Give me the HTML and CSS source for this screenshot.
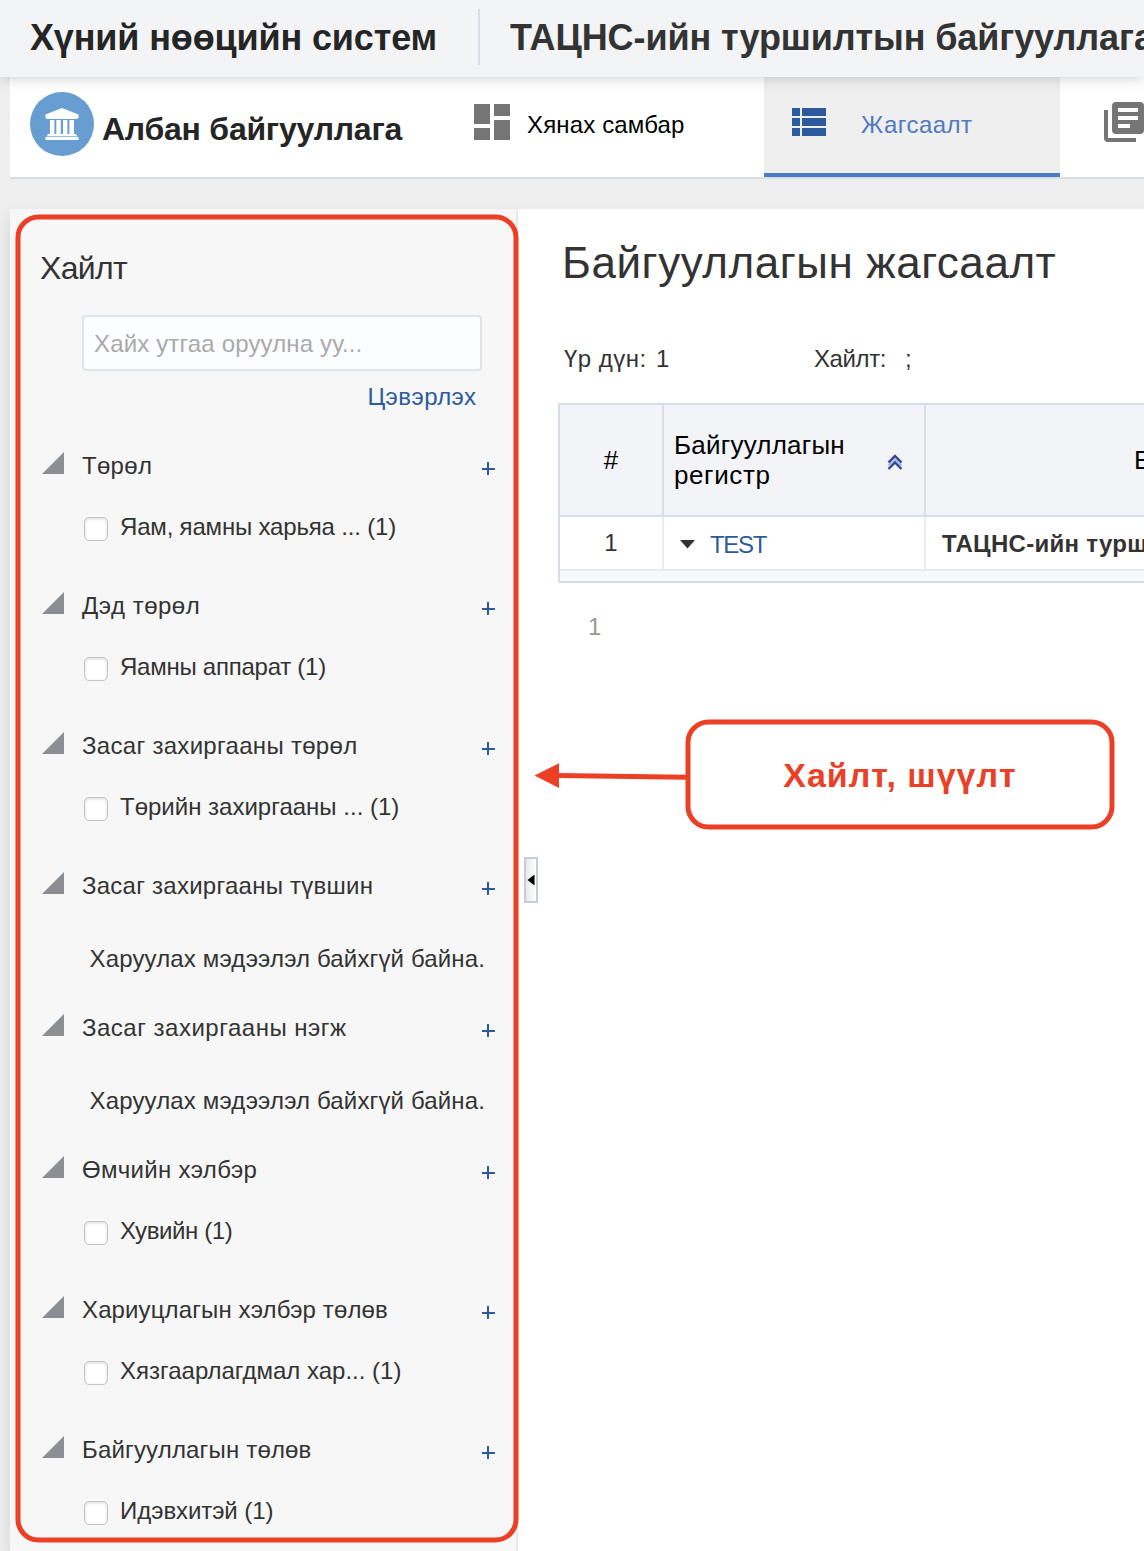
FILE: index.html
```html
<!DOCTYPE html>
<html lang="mn">
<head>
<meta charset="utf-8">
<title>Хүний нөөцийн систем</title>
<link rel="stylesheet" href="styles.css">
</head>
<body>
<div class="page">
  <header class="topbar">
    <div class="topbar-title">Хүний нөөцийн систем</div>
    <div class="topbar-org">ТАЦНС-ийн туршилтын байгууллага</div>
  </header>

  <nav class="module-nav">
    <div class="module">
      <svg class="module-icon" viewBox="0 0 64 64" width="64" height="64">
        <circle cx="32" cy="32" r="32" fill="#689dd2"/>
        <g fill="#fff">
          <path d="M32 16 48.500 22.500V25.500L47 27H17L15.500 25.500V22.500Z"/>
          <path d="M20 28h4.400v14h-4.400zM26.300 28h4.500v14h-4.500zM33 28h4.400v14h-4.400zM39.400 28h4.600v14h-4.600z"/>
          <path d="M18 42h28l1 2.300H17zM15.500 45h33v3h-33z"/>
        </g>
        <path d="M16.500 44.700h31" stroke="#a4c4e4" stroke-width=".8"/>
      </svg>
      <span class="module-name">Албан байгууллага</span>
    </div>
    <a class="tab tab-dashboard">
      <svg viewBox="0 0 36 36" width="36" height="36" fill="#757575" shape-rendering="crispEdges"><path d="M0 0h16v20H0zM20 0h16v12H20zM0 24h16v12H0zM20 16h16v20H20z"/></svg>
      <span>Хянах самбар</span>
    </a>
    <a class="tab tab-list">
      <svg viewBox="0 0 34 28" width="34" height="28" fill="#2c5b9b" shape-rendering="crispEdges"><path d="M0 0h8v8H0zM10 0h24v8H10zM0 10h8v8H0zM10 10h24v8H10zM0 20h8v8H0zM10 20h24v8H10z"/></svg>
      <span>Жагсаалт</span>
    </a>
    <a class="tab tab-library">
      <svg viewBox="0 0 40 40" width="40" height="40" fill="#757575"><path fill-rule="evenodd" d="M12 0H36a4 4 0 0 1 4 4V28a4 4 0 0 1-4 4H12a4 4 0 0 1-4-4V4a4 4 0 0 1 4-4ZM14 6v4h20V6ZM14 14v4h20v-4ZM14 22v4h12v-4Z"/><path d="M0 8h4v28h28v4H4a4 4 0 0 1-4-4Z"/></svg>
    </a>
  </nav>

  <div class="workspace">
    <aside class="sidebar">
      <h2 class="sidebar-title">Хайлт</h2>
      <div class="search-box">Хайх утгаа оруулна уу...</div>
      <a class="clear">Цэвэрлэх</a>

      <section class="facet facet-type">
        <div class="facet-head"><svg class="fold" viewBox="0 0 24 24"><path d="M23 1V23H1Z"/></svg><h3>Төрөл</h3><a class="plus"></a></div>
        <label class="option"><i class="check"></i><span>Яам, яамны харьяа ... (1)</span></label>
      </section>
      <section class="facet facet-subtype">
        <div class="facet-head"><svg class="fold" viewBox="0 0 24 24"><path d="M23 1V23H1Z"/></svg><h3>Дэд төрөл</h3><a class="plus"></a></div>
        <label class="option"><i class="check"></i><span>Яамны аппарат (1)</span></label>
      </section>
      <section class="facet facet-admin-type">
        <div class="facet-head"><svg class="fold" viewBox="0 0 24 24"><path d="M23 1V23H1Z"/></svg><h3>Засаг захиргааны төрөл</h3><a class="plus"></a></div>
        <label class="option"><i class="check"></i><span>Төрийн захиргааны ... (1)</span></label>
      </section>
      <section class="facet facet-empty facet-level">
        <div class="facet-head"><svg class="fold" viewBox="0 0 24 24"><path d="M23 1V23H1Z"/></svg><h3>Засаг захиргааны түвшин</h3><a class="plus"></a></div>
        <p class="empty">Харуулах мэдээлэл байхгүй байна.</p>
      </section>
      <section class="facet facet-empty facet-unit">
        <div class="facet-head"><svg class="fold" viewBox="0 0 24 24"><path d="M23 1V23H1Z"/></svg><h3>Засаг захиргааны нэгж</h3><a class="plus"></a></div>
        <p class="empty">Харуулах мэдээлэл байхгүй байна.</p>
      </section>
      <section class="facet facet-ownership">
        <div class="facet-head"><svg class="fold" viewBox="0 0 24 24"><path d="M23 1V23H1Z"/></svg><h3>Өмчийн хэлбэр</h3><a class="plus"></a></div>
        <label class="option"><i class="check"></i><span>Хувийн (1)</span></label>
      </section>
      <section class="facet facet-liability">
        <div class="facet-head"><svg class="fold" viewBox="0 0 24 24"><path d="M23 1V23H1Z"/></svg><h3>Хариуцлагын хэлбэр төлөв</h3><a class="plus"></a></div>
        <label class="option"><i class="check"></i><span>Хязгаарлагдмал хар... (1)</span></label>
      </section>
      <section class="facet facet-status">
        <div class="facet-head"><svg class="fold" viewBox="0 0 24 24"><path d="M23 1V23H1Z"/></svg><h3>Байгууллагын төлөв</h3><a class="plus"></a></div>
        <label class="option"><i class="check"></i><span>Идэвхитэй (1)</span></label>
      </section>
    </aside>

    <main class="content">
      <h1>Байгууллагын жагсаалт</h1>
      <div class="summary">
        <span class="sum-label">Үр дүн:</span><span class="sum-count">1</span>
        <span class="sum-query">Хайлт:</span><span class="sum-semi">;</span>
      </div>
      <div class="grid">
        <div class="grid-row grid-head">
          <div class="cell cell-num">#</div>
          <div class="cell cell-reg">
            <div class="col-title"><div class="col-line1">Байгууллагын</div><div class="col-line2">регистр</div></div>
            <svg class="sort" viewBox="0 0 16 16" width="16" height="16" fill="none" stroke-width="2.400"><path d="M1.500 11.500 8 5.500 14.500 11.500" stroke="#a9bdf0"/><path d="M1.500 8.500 8 2 14.500 8.500M1.500 15 8 8.500 14.500 15" stroke="#35468c"/></svg>
          </div>
          <div class="cell cell-name">Байгууллагын нэр</div>
        </div>
        <div class="grid-row grid-data">
          <div class="cell cell-num">1</div>
          <div class="cell cell-reg"><svg class="caret" viewBox="0 0 15 9" width="15" height="9"><path d="M0 0H15L7.500 8.500Z" fill="#333"/></svg><a>TEST</a></div>
          <div class="cell cell-name">ТАЦНС-ийн туршилтын байгууллага</div>
        </div>
        <div class="grid-foot"></div>
      </div>
      <div class="pager">1</div>
    </main>
  </div>

  <div class="collapse"><svg viewBox="0 0 8 12" width="8" height="12"><path d="M7.500 .5V11.500L.5 6Z" fill="#000"/></svg></div>
  <div class="highlight"></div>
  <svg class="arrow" viewBox="0 0 154 26" width="154" height="26"><path d="M24 12.500 153 14.300" stroke="#eb4025" stroke-width="5"/><path d="M.5 12.500 25 .3V25Z" fill="#eb4025"/></svg>
  <div class="callout">Хайлт, шүүлт</div>
</div>
</body>
</html>
```
FILE: styles.css
```css
* { box-sizing: border-box; }

body {
  margin: 0;
  background: #efefef;
  color: #333;
  font: 24px/40px "Liberation Sans", Arial, sans-serif;
}

h1, h2, h3, p { margin: 0; font-weight: normal; }
svg { display: block; flex: none; }

.page {
  position: relative;
  width: 1144px;
  height: 1551px;
  overflow: hidden;
}

/* Top bar */
.topbar {
  position: relative;
  z-index: 2;
  display: flex;
  height: 77px;
  padding: 9px 0 0 30px;
  background: #f3f4f6;
  box-shadow: 0 0 14px rgba(0, 0, 0, .22);
  font-size: 36px;
  font-weight: bold;
  line-height: 57px;
  white-space: nowrap;
}
.topbar-title {
  flex: none;
  width: 450px;
  height: 56px;
  border-right: 2px solid #d6dfe6;
  color: #252525;
  letter-spacing: -.14px;
}
.topbar-org { padding-left: 30px; letter-spacing: -.1px; }

/* Module navigation */
.module-nav {
  display: flex;
  height: 102px;
  margin-left: 10px;
  background: #fff;
  border-bottom: 2px solid #d8dfe4;
}
.module {
  display: flex;
  width: 436px;
  padding: 15px 0 0 20px;
}
.module-name {
  padding: 17px 0 0 8px;
  color: #252525;
  font-size: 32px;
  font-weight: bold;
  letter-spacing: -.24px;
  white-space: nowrap;
}
.tab { display: flex; height: 100px; color: #000; }
.tab span { margin-top: 28px; letter-spacing: .15px; }
.tab-dashboard { width: 318px; padding: 0 0 0 28px; gap: 17px; }
.tab-dashboard svg { margin-top: 27px; }
.tab-list {
  width: 296px;
  padding-left: 28px;
  gap: 35px;
  background: #efefef;
  border-bottom: 4px solid #5079bf;
  color: #5079bf;
}
.tab-list svg { margin-top: 31px; }
.tab-list span { letter-spacing: .47px; }
.tab-library { padding-left: 44px; }
.tab-library svg { margin-top: 25px; }

/* Workspace */
.workspace {
  display: flex;
  height: 1342px;
  margin: 30px 0 0 10px;
  box-shadow: 0 8px 16px rgba(0, 0, 0, .12);
}
.sidebar {
  display: flex;
  flex: none;
  flex-direction: column;
  width: 508px;
  padding-top: 39px;
  background: #f7f7f7;
  border-right: 2px solid #e9e9e9;
}
.sidebar-title {
  padding-left: 30px;
  font-size: 32px;
  line-height: 40px;
  letter-spacing: -.7px;
}
.search-box {
  width: 400px;
  height: 56px;
  margin: 27px 0 0 72px;
  padding-left: 10px;
  background: #fcfdff;
  border: 2px solid #dfe4e7;
  border-radius: 4px;
  color: #aaa;
  line-height: 54px;
  letter-spacing: .15px;
}
.clear {
  align-self: flex-end;
  margin: 6px 39.500px 29px 0;
  color: #2c5b9b;
  letter-spacing: .45px;
}

/* Facets */
.facet { flex: none; height: 140px; }
.facet-empty { height: 142px; }
.facet-head {
  display: flex;
  height: 40px;
  padding-left: 31px;
}
.fold { width: 24px; height: 24px; margin-top: 5px; fill: #8b8e93; }
.facet h3 {
  flex: 1;
  padding-left: 17px;
  font-size: 24px;
  white-space: nowrap;
  letter-spacing: .3px;
}
.plus {
  width: 13px;
  height: 13px;
  margin: 16px 21.500px 0 0;
  background:
    linear-gradient(#2c5b9b, #2c5b9b) center / 13px 2px no-repeat,
    linear-gradient(#2c5b9b, #2c5b9b) center / 2px 13px no-repeat;
}
.option {
  display: flex;
  padding: 21px 0 0 74px;
  white-space: nowrap;
}
.check {
  width: 24px;
  height: 24px;
  margin: 10px 12px 0 0;
  background: #fff;
  border: 1px solid #c4c4c4;
  border-radius: 5px;
  box-shadow: inset 0 1px 3px rgba(0, 0, 0, .16);
}
.empty {
  padding: 33px 0 0 79.500px;
  white-space: nowrap;
  letter-spacing: .15px;
}
.facet-type .option { letter-spacing: -.18px; }
.facet-subtype h3 { letter-spacing: .5px; }
.facet-subtype .option { letter-spacing: -.25px; }
.facet-level h3 { letter-spacing: .25px; }
.facet-unit h3 { letter-spacing: .5px; }
.facet-ownership .option { letter-spacing: -.4px; }
.facet-liability h3 { letter-spacing: .12px; }
.facet-status h3 { letter-spacing: .17px; }
.facet-status .option { letter-spacing: -.1px; }

/* Content */
.content {
  flex: 1;
  min-width: 0;
  padding: 29px 0 0 40px;
  background: #fff;
  overflow: hidden;
}
.content h1 {
  padding-left: 4px;
  font-size: 44px;
  line-height: 50px;
  letter-spacing: .55px;
}
.summary {
  display: flex;
  margin-top: 51px;
  padding-left: 6px;
}
.sum-label { width: 92px; letter-spacing: .5px; }
.sum-count { width: 158px; }
.sum-query { width: 91px; letter-spacing: -.4px; }

.grid {
  width: 900px;
  margin-top: 24px;
  border: 2px solid #d6dfe6;
}
.grid-row { display: grid; grid-template-columns: 104px 262px 1fr; }
.grid-head {
  height: 112px;
  background: #f2f4f8;
  border-bottom: 2px solid #d6dfe6;
  color: #000;
  font-size: 26px;
  line-height: 30px;
}
.cell { display: flex; align-items: center; white-space: nowrap; }
.cell-num { justify-content: center; border-right: 2px solid #d6dfe6; }
.cell-reg { border-right: 2px solid #d6dfe6; }
.grid-head .cell-reg { padding-left: 10px; }
.col-title { width: 213px; }
.col-line1 { letter-spacing: .22px; }
.col-line2 { letter-spacing: .6px; }
.sort { margin-top: 4px; }
.grid-head .cell-name { padding-left: 208px; }
.grid-data { height: 54px; border-bottom: 2px solid #ebebeb; line-height: 52px; }
.grid-data .cell { height: 52px; border-color: #ebebeb; }
.grid-data .cell-reg { padding-left: 16px; gap: 15px; }
.grid-data a { padding-top: 4px; color: #2c5b9b; letter-spacing: -1.3px; }
.caret { margin-top: 3px; }
.grid-data .cell-name {
  padding: 2px 0 0 16px;
  font-weight: bold;
  letter-spacing: .3px;
}
.grid-foot { height: 10px; background: #f8f9fd; }
.pager { padding: 24px 0 0 30px; color: #999; }

/* Splitter handle and annotations lie over the page */
.collapse {
  position: absolute;
  left: 524px;
  top: 857px;
  display: flex;
  align-items: center;
  justify-content: center;
  width: 14px;
  height: 46px;
  background: linear-gradient(90deg, #e7eaec, #fff);
  border: 2px solid #c5ced6;
}
.highlight {
  position: absolute;
  left: 16px;
  top: 215px;
  width: 503px;
  height: 1328px;
  border: 5px solid #eb4025;
  border-radius: 23px;
  transform: translate(-.5px, -.5px);
}
.arrow { position: absolute; left: 534px; top: 762.500px; }
.callout {
  position: absolute;
  left: 686px;
  top: 720px;
  width: 429px;
  height: 110px;
  border: 5px solid #eb4025;
  border-radius: 23px;
  color: #eb4025;
  font-size: 34px;
  font-weight: bold;
  line-height: 100px;
  letter-spacing: 1px;
  text-align: center;
  transform: translate(-.5px, -.5px);
}
```
